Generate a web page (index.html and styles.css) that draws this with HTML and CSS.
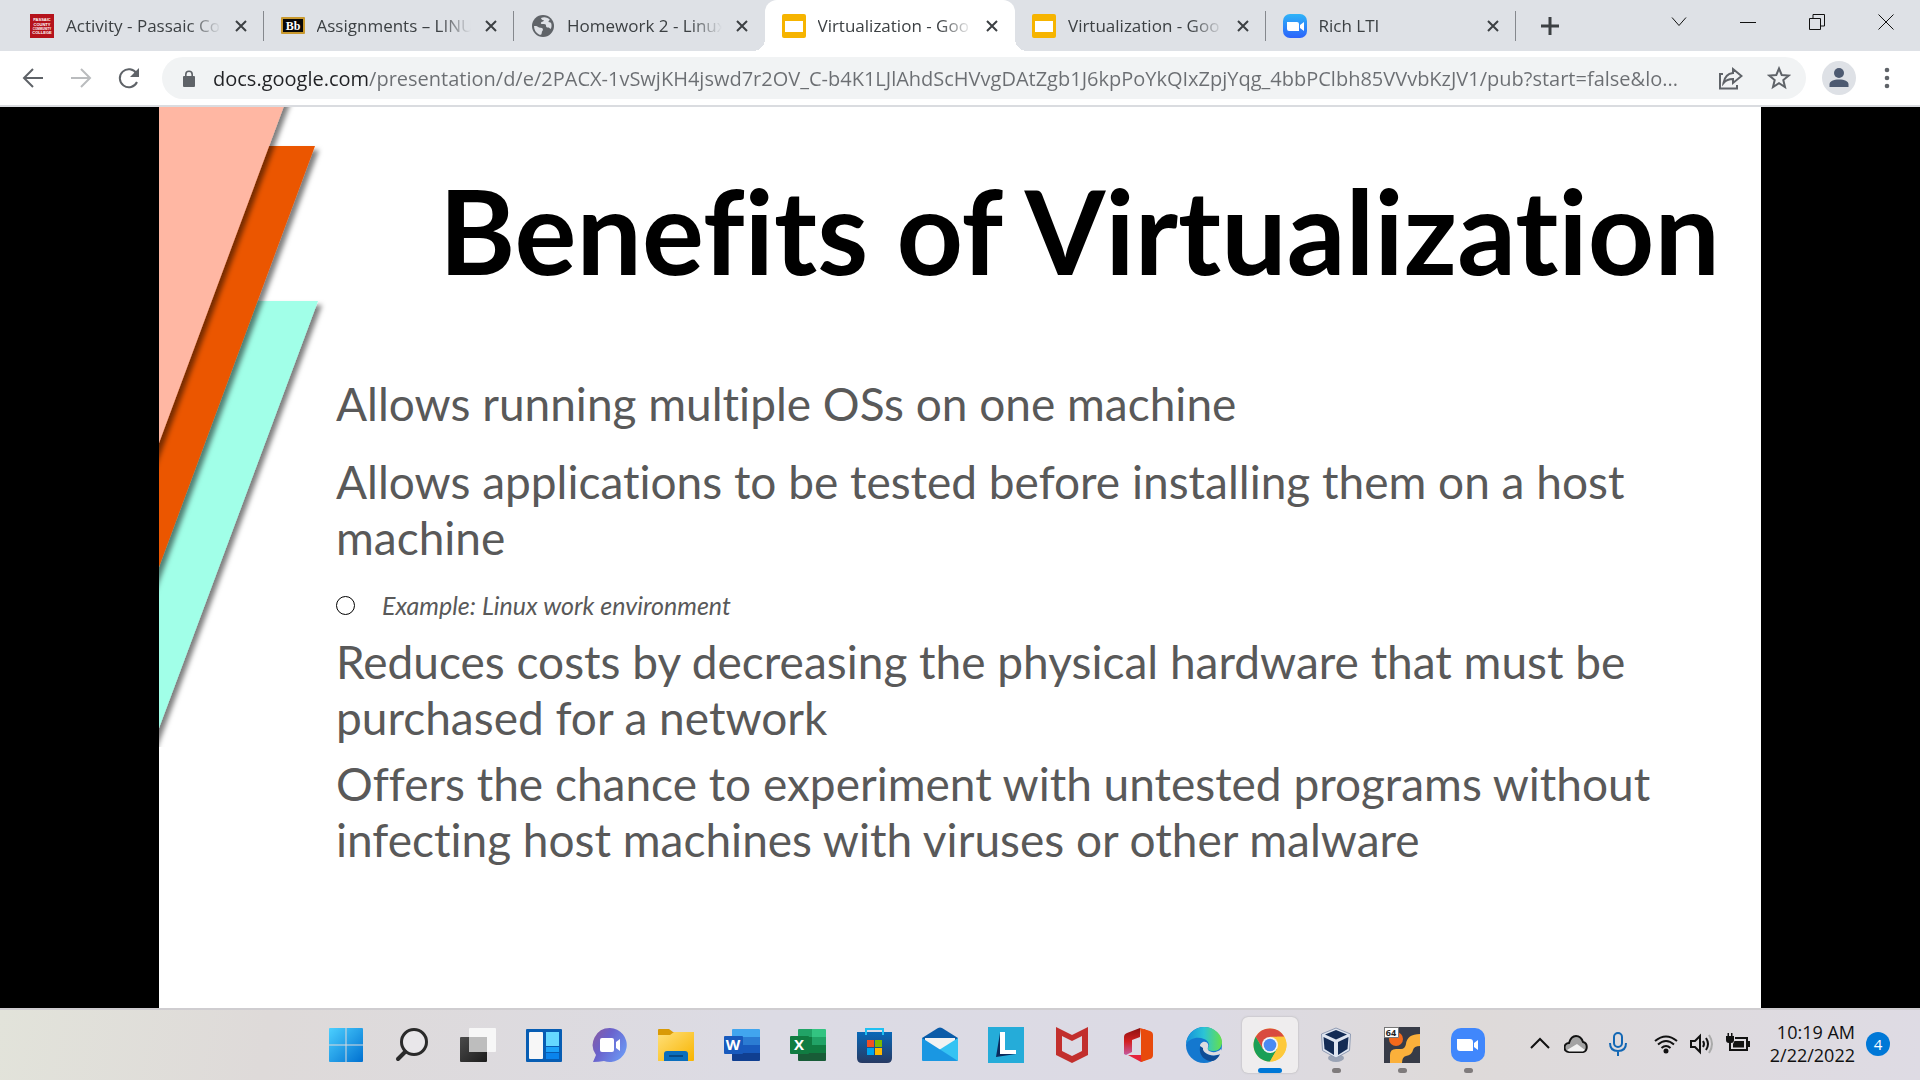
FILE: index.html
```html
<!DOCTYPE html>
<html lang="en">
<head>
<meta charset="utf-8">
<title>Virtualization - Google Slides</title>
<meta name="viewport" content="width=device-width, initial-scale=1">
<link rel="stylesheet" href="styles.css">
</head>
<body>
<header class="browser">
  <div class="tabstrip">
    <div class="tabs">
      <div class="tab">
        <svg class="favicon" viewBox="0 0 24 24" aria-hidden="true"><path fill="#b5121b" d="M0 0h24v24H0z"/><g class="crest" text-anchor="middle"><text x="12" y="7">PASSAIC</text><text x="12" y="12">COUNTY</text><text class="small" x="12" y="16">COMMUNITY</text><text x="12" y="20">COLLEGE</text></g></svg>
        <a class="tab-title" href="#">Activity - Passaic Co</a>
        <button class="tab-close" aria-label="Close tab"><svg viewBox="0 0 12 12"><path d="M1 1l10 10M11 1L1 11"/></svg></button>
      </div>
      <div class="tab">
        <svg class="favicon" viewBox="0 0 24 24" aria-hidden="true"><rect y="3" width="24" height="17" rx="1" fill="#c9992e"/><path fill="#080808" d="M2 5h20v13H2z"/><text class="bb" x="12" y="16" text-anchor="middle">Bb</text></svg>
        <a class="tab-title" href="#">Assignments – LINU</a>
        <button class="tab-close" aria-label="Close tab"><svg viewBox="0 0 12 12"><path d="M1 1l10 10M11 1L1 11"/></svg></button>
      </div>
      <div class="tab no-rule">
        <svg class="favicon" viewBox="0 0 24 24" aria-hidden="true"><circle cx="12" cy="12" r="11" fill="#5f6368"/><path fill="#dee1e6" d="M3 12c2-.3 4 .2 5 1.500l3 .5c1.500 1 1 2.500 0 3.500l-.5 2.500c-.3 1-1.500 1-2.500.5C5 19 3 16 3 12zM10 4c3-1.500 7-.8 9 2-1 .3-1.500 1-1.500 2l2 .5.8 1c.5 2 .3 4-.6 5.500l-2-1.500c-1.500.3-2.500-.3-2.700-1.500.2-1.300-.5-2-2-2h-2.500c-1-.6-.8-1.600.5-2.300 1.500-.3 2.200-1 1.500-1.700-1 .2-2-.3-2.500-2z"/></svg>
        <a class="tab-title" href="#">Homework 2 - Linux</a>
        <button class="tab-close" aria-label="Close tab"><svg viewBox="0 0 12 12"><path d="M1 1l10 10M11 1L1 11"/></svg></button>
      </div>
      <div class="tab active no-rule">
        <svg class="favicon" viewBox="0 0 24 24" aria-hidden="true"><rect width="24" height="24" rx="2" fill="#f6b400"/><path fill="#fff" d="M3 7h18v11H3z"/></svg>
        <a class="tab-title" href="#" aria-current="page">Virtualization - Goo</a>
        <button class="tab-close" aria-label="Close tab"><svg viewBox="0 0 12 12"><path d="M1 1l10 10M11 1L1 11"/></svg></button>
      </div>
      <div class="tab">
        <svg class="favicon" viewBox="0 0 24 24" aria-hidden="true"><rect width="24" height="24" rx="2" fill="#f6b400"/><path fill="#fff" d="M3 7h18v11H3z"/></svg>
        <a class="tab-title" href="#">Virtualization - Goo</a>
        <button class="tab-close" aria-label="Close tab"><svg viewBox="0 0 12 12"><path d="M1 1l10 10M11 1L1 11"/></svg></button>
      </div>
      <div class="tab">
        <svg class="favicon" viewBox="0 0 24 24" aria-hidden="true"><defs><linearGradient id="zoomtab" x2="0" y2="1"><stop stop-color="#2fb4f8"/><stop offset="1" stop-color="#2b63fb"/></linearGradient></defs><rect width="24" height="24" rx="7" fill="url(#zoomtab)"/><path fill="#fff" d="M4 8h10q2 0 2 2v7H6q-2 0-2-2zM17 11l4-3v9l-4-3z"/></svg>
        <a class="tab-title" href="#">Rich LTI</a>
        <button class="tab-close" aria-label="Close tab"><svg viewBox="0 0 12 12"><path d="M1 1l10 10M11 1L1 11"/></svg></button>
      </div>
    </div>
    <button class="new-tab" aria-label="New tab"><svg viewBox="0 0 20 20"><path d="M10 1v18M1 10h18"/></svg></button>
    <div class="window-controls">
      <button aria-label="Search tabs"><svg viewBox="0 0 16 16"><path d="M1 3.500l7 8 7-8"/></svg></button>
      <button aria-label="Minimize"><svg viewBox="0 0 16 16"><path d="M0 8.500h16"/></svg></button>
      <button aria-label="Restore"><svg viewBox="0 0 16 16"><path d="M.5 4.500h11v11H.5zM4 4.500v-4h11.500V12H12"/></svg></button>
      <button aria-label="Close"><svg viewBox="0 0 16 16"><path d="M.5.500l15 15M15.500.500l-15 15"/></svg></button>
    </div>
  </div>
  <div class="toolbar">
    <button class="nav" aria-label="Back"><svg viewBox="0 0 24 24"><path d="M22 12H4M12 3l-9 9 9 9"/></svg></button>
    <button class="nav off" aria-label="Forward" disabled><svg viewBox="0 0 24 24"><path d="M2 12h18M12 3l9 9-9 9"/></svg></button>
    <button class="nav" aria-label="Reload"><svg viewBox="0 0 24 24"><path d="M20 16a9 9 0 1 1-.5-8.500"/><path class="solid" d="M22 2v9h-9z"/></svg></button>
    <div class="omnibox">
      <svg class="lock" viewBox="0 0 12 17" aria-hidden="true"><path fill="#5f6368" d="M0 7q0-1 1-1h1V4.500a4 4 0 0 1 8 0V6h1q1 0 1 1v9q0 1-1 1H1q-1 0-1-1zM3.600 6h4.800V4.500a2.400 2.400 0 0 0-4.800 0z"/></svg>
      <input class="url" type="text" aria-label="Address" spellcheck="false" value="docs.google.com/presentation/d/e/2PACX-1vSwjKH4jswd7r2OV_C-b4K1LJlAhdScHVvgDAtZgb1J6kpPoYkQIxZpjYqg_4bbPClbh85VVvbKzJV1/pub?start=false&amp;lo...">
      <button class="omni" aria-label="Share"><svg viewBox="0 0 24 24"><path d="M4 8H1v14.500h17V19M14 3l8.500 7L14 17v-4c-4 0-7 1-9.500 4C5.500 11 9 7.500 14 7z"/></svg></button>
      <button class="omni" aria-label="Bookmark"><svg viewBox="0 0 24 24"><path stroke-width="2" d="M12 2.500l2.700 6.500 7 .5-5.400 4.500 1.700 7-6-3.800L6 21l1.700-7-5.400-4.500 7-.5z"/></svg></button>
    </div>
    <button class="avatar" aria-label="Profile"><svg viewBox="0 0 34 34"><circle cx="17" cy="12" r="5" fill="#4d5a71"/><path fill="#4d5a71" d="M7.500 26v-2.500c0-3.500 4-5 9.500-5s9.500 1.500 9.500 5V26z"/></svg></button>
    <button class="menu" aria-label="Menu"><svg viewBox="0 0 6 22"><circle cx="3" cy="3" r="2.300"/><circle cx="3" cy="11" r="2.300"/><circle cx="3" cy="19" r="2.300"/></svg></button>
  </div>
</header>

<main class="viewer">
  <article class="slide">
    <svg class="ribbons" viewBox="0 0 170 640" aria-hidden="true">
      <defs><filter id="drop" x="-10%" y="-10%" width="130%" height="120%"><feDropShadow dx="4" dy="4" stdDeviation="2.500" flood-color="#000" flood-opacity=".5"/></filter></defs>
      <path filter="url(#drop)" fill="#a1ffe8" d="M-10 194H159L0 621l-10 27z"/>
      <path filter="url(#drop)" fill="#eb5600" d="M-10 39H156L0 460l-10 27z"/>
      <path filter="url(#drop)" fill="#ffb7a3" d="M-10-20H132L0 336l-10 27z"/>
    </svg>
    <h1>Benefits of Virtualization</h1>
    <div class="points">
      <p>Allows running multiple OSs on one machine</p>
      <p>Allows applications to be tested before installing them on a host machine</p>
      <ul><li>Example: Linux work environment</li></ul>
      <p>Reduces costs by decreasing the physical hardware that must be purchased for a network</p>
      <p>Offers the chance to experiment with untested programs without infecting host machines with viruses or other malware</p>
    </div>
  </article>
</main>

<footer class="taskbar">
  <nav class="apps" aria-label="Taskbar">
    <button class="app" aria-label="Start"><svg viewBox="0 0 36 36"><defs><linearGradient id="win" gradientUnits="userSpaceOnUse" x1="1" y1="1" x2="35" y2="35"><stop stop-color="#4cd0ff"/><stop offset="1" stop-color="#0070d0"/></linearGradient></defs><path fill="url(#win)" d="M2 1h15.500v16.500H1V2q0-1 1-1zM18.500 1H34q1 0 1 1v15.500H18.500zM1 18.500h16.500V35H2q-1 0-1-1zM18.500 18.500H35V34q0 1-1 1H18.500z"/></svg></button>
    <button class="app" aria-label="Search"><svg viewBox="0 0 36 36" fill="none" stroke="#2a2a2a" stroke-linecap="round"><circle cx="20" cy="15" r="12.500" fill="#e9e7ea" stroke-width="3"/><path stroke-width="4" d="M11 25l-7 7"/></svg></button>
    <button class="app" aria-label="Task view"><svg viewBox="0 0 36 36"><defs><linearGradient id="tv" x2="1" y2="1"><stop stop-color="#4b4b4b"/><stop offset="1" stop-color="#1c1c1c"/></linearGradient></defs><rect y="10" width="27" height="25" rx="1" fill="url(#tv)"/><rect x="9" y="1" width="27" height="24" rx="1" fill="#f7f7f7"/><path fill="#bdbdbd" d="M9 10h18v15H9z"/></svg></button>
    <button class="app" aria-label="Widgets"><svg viewBox="0 0 36 36"><rect y="2" width="36" height="33" rx="1" fill="#075db3"/><rect x="3" y="5" width="14" height="27" rx="1" fill="#f7f7f7"/><path fill="#66d8ff" d="M20 5h13v14H20z"/><path fill="#1ca2f8" d="M20 20h13v5H20z"/><path fill="#0a84ec" d="M20 26h13v6H20z"/></svg></button>
    <button class="app" aria-label="Chat"><svg viewBox="0 0 36 36"><defs><linearGradient id="chat" x1="0" x2="1" y2=".6"><stop stop-color="#8b5a9e"/><stop offset=".45" stop-color="#6a62cc"/><stop offset="1" stop-color="#6b93f0"/></linearGradient></defs><path fill="url(#chat)" d="M18 1a17 17 0 1 1-6 33q-5 1-11 1l3-7A17 17 0 0 1 18 1z"/><rect x="8" y="11" width="14" height="14" rx="2" fill="#fff"/><path fill="#fff" d="M24 15l4-3v12l-4-3z"/></svg></button>
    <button class="app" aria-label="File Explorer"><svg viewBox="0 0 36 36"><defs><linearGradient id="fold" x2="1" y2="1"><stop stop-color="#ffe07a"/><stop offset="1" stop-color="#f8b400"/></linearGradient></defs><path fill="#d99a06" d="M0 3q0-1 1-1h10l4 3h20q1 0 1 1v6H0z"/><path fill="url(#fold)" d="M0 8h12l4-3h20v28q0 1-1 1H0z"/><path fill="#0a6ebd" d="M6 34v-7q0-3 3-3h18q3 0 3 3v7z"/><path stroke="#064a86" stroke-width="2" d="M11 29h14"/></svg></button>
    <button class="app" aria-label="Word"><svg viewBox="0 0 36 36"><path fill="#41a5ee" d="M8 3q0-1 1-1h26q1 0 1 1v7H8z"/><path fill="#2b7cd3" d="M8 10h28v8H8z"/><path fill="#185abd" d="M8 18h28v8H8z"/><path fill="#103f91" d="M8 26h28v7q0 1-1 1H9q-1 0-1-1z"/><rect y="9" width="19" height="18" rx="1" fill="#185abd"/><text class="tile" x="9" y="23" text-anchor="middle">W</text></svg></button>
    <button class="app" aria-label="Excel"><svg viewBox="0 0 36 36"><path fill="#21a366" d="M8 3q0-1 1-1h13v8H8z"/><path fill="#33c481" d="M22 2h13q1 0 1 1v7H22z"/><path fill="#107c41" d="M8 10h14v16H8zM22 18h14v8H22z"/><path fill="#21a366" d="M22 10h14v8H22z"/><path fill="#185c37" d="M8 26h28v7q0 1-1 1H9q-1 0-1-1z"/><rect y="9" width="19" height="18" rx="1" fill="#107c41"/><text class="tile" x="9" y="23" text-anchor="middle">X</text></svg></button>
    <button class="app" aria-label="Microsoft Store"><svg viewBox="0 0 36 36"><defs><linearGradient id="store" x2="0" y2="1"><stop stop-color="#0868b8"/><stop offset="1" stop-color="#273a63"/></linearGradient></defs><path fill="url(#store)" d="M1 5h35v26q0 5-5 5H6q-5 0-5-5z"/><path fill="none" stroke="#1fc0f2" stroke-width="2" d="M10 8V2h17v6"/><path fill="#f25022" d="M11 13h7v7h-7z"/><path fill="#7fba00" d="M19 13h7v7h-7z"/><path fill="#00a4ef" d="M11 21h7v7h-7z"/><path fill="#ffb900" d="M19 21h7v7h-7z"/></svg></button>
    <button class="app" aria-label="Mail"><svg viewBox="0 0 36 36"><path fill="#0a5ba8" d="M0 11L16 1q2-1 4 0l16 10v5H0z"/><path fill="#f2f2f2" d="M3 11h30v3L18 26 3 14z"/><path fill="#35c3f3" d="M36 11v22q0 1-1 1L17 23z"/><path fill="#1a97e2" d="M0 11l36 23H1q-1 0-1-1z"/></svg></button>
    <button class="app" aria-label="Lenovo"><svg viewBox="0 0 36 36"><path fill="#25acd9" d="M0 0h36v36H0z"/><path fill="#0b2a5c" d="M12 6L8 30l20-3-12-4z"/><path fill="#fff" d="M12 5h5v18h11v4H12z"/></svg></button>
    <button class="app" aria-label="McAfee"><svg viewBox="0 0 36 36"><path fill="#c22f2d" fill-rule="evenodd" d="M2 0l16 8 16-8v28l-16 8-16-8zM8 9v15l10 5 10-5V9l-10 5z"/></svg></button>
    <button class="app" aria-label="Office"><svg viewBox="0 0 36 36"><defs><linearGradient id="off" x2="0" y2="1"><stop stop-color="#8b1010"/><stop offset=".5" stop-color="#d32020"/><stop offset="1" stop-color="#c55aa0"/></linearGradient></defs><path fill="url(#off)" d="M20 1v9l-8 3v12l-6 3-2-1V10q0-3 3-4z"/><path fill="#e5233d" d="M8 28h13V9l3-7 4 2v28l-7 3z"/><path fill="#e84a0c" d="M20 1l10 3q3 1 3 4v20q0 3-3 4l-9 3V9z"/></svg></button>
    <button class="app" aria-label="Edge"><svg viewBox="0 0 36 36"><defs><linearGradient id="edge" x2="1"><stop stop-color="#1590dc"/><stop offset=".5" stop-color="#2bc4d6"/><stop offset="1" stop-color="#66e04a"/></linearGradient></defs><circle cx="18" cy="18" r="18" fill="#1478cf"/><path fill="url(#edge)" d="M0 17C1 7 9 0 18 0c11 0 18 8 18 15 0 6-4 9-8 9-5 0-7-1-6-3 2-3 1-7-4-9-7-3-15 0-18 5z"/><path fill="#0f4c96" d="M15 17c-4 9 3 18 12 17 3-1 6-4 7-7-8 4-17 0-17-7z"/><path fill="#dddbe0" d="M14 19c0-4 6-6 8-2 1 2-1 4 0 6 3 3 9 3 13-1l1 5-2 0c-8 4-18-1-17-6z"/></svg></button>
    <button class="app current" aria-label="Chrome"><svg viewBox="0 0 36 36"><circle cx="18" cy="18" r="16.500" fill="#fdc93b"/><path fill="#d94b40" d="M3.700 9.800A16.500 16.500 0 0 1 32.300 9.800H18L10.900 22.100z"/><path fill="#1a9f57" d="M3.700 9.800a16.500 16.500 0 0 0 14.300 24.700l7.100-12.400-14.200 0z"/><path fill="#fdc93b" d="M32.300 9.800A16.500 16.500 0 0 1 18 34.500l7.100-12.400V9.800z"/><circle cx="18" cy="18" r="8" fill="#f4f4f4"/><circle cx="18" cy="18" r="6.300" fill="#4a8af4"/></svg></button>
    <button class="app running" aria-label="VirtualBox"><svg viewBox="0 0 36 36"><ellipse cx="18" cy="31" rx="8" ry="4" fill="#9aa3b5"/><path fill="#dfe5f0" stroke="#8f9bb3" d="M18 1l14.500 6-1 16.500L18 31 4.500 23.500 3.500 7z"/><path fill="#142c55" d="M18 3l11 4.500-11 5-11-5zM5.500 10L16 15v13L6.500 22zM30.500 10L20 15v13l9.500-6z"/></svg></button>
    <button class="app running" aria-label="PuTTY"><svg viewBox="0 0 36 36"><path fill="#373b47" d="M0 0h36v36H0z"/><circle cx="12" cy="12" r="7" fill="#f4691b"/><path fill="#fbb03b" d="M6 36v-8q0-6 6-6h5q4 0 5-5 1-10 14-10v12q-6 0-7 4-1 5-7 6-4 1-4 7z"/><path fill="#fff" stroke="#777" d="M.5.500h14v10H.5z"/><text class="bits" x="7" y="9" text-anchor="middle">64</text></svg></button>
    <button class="app running" aria-label="Zoom"><svg viewBox="0 0 36 36"><rect x="1" y="1" width="34" height="34" rx="10" fill="#4087fc"/><path fill="#fff" d="M7 12h13q3 0 3 3v9H10q-3 0-3-3zM24 16l4-3v10l-4-3z"/></svg></button>
  </nav>
  <div class="tray">
    <button class="tray-icon more" aria-label="Show hidden icons"><svg viewBox="0 0 24 24"><path d="M3 16l9-9 9 9"/></svg></button>
    <button class="tray-icon" aria-label="OneDrive"><svg viewBox="0 0 24 24"><path fill="#a3a3a3" d="M5 11Q7 4 12 4q5 0 7 6c5 1 5 9 0 10H5c-6 0-6-9 0-9z"/><path fill="#f1f1f1" stroke="none" d="M3 18l10-6 8 6-2 1.500H5z"/></svg></button>
    <button class="tray-icon mic" aria-label="Microphone"><svg viewBox="0 0 24 24"><rect x="8" y="1" width="8" height="14" rx="4"/><path d="M4 11q0 8 8 8t8-8M12 19v5"/></svg></button>
    <div class="system">
      <button class="tray-icon" aria-label="Wi-Fi"><svg viewBox="0 0 24 24"><path d="M1 9q11-9 22 0M4 12.500q8-7 16 0M7.500 16q4.500-4 9 0"/><circle cx="12" cy="19" r="1.500" fill="#111"/></svg></button>
      <button class="tray-icon" aria-label="Volume"><svg viewBox="0 0 24 24"><path d="M1 9h4l5-5v16l-5-5H1zM13 9q2 3 0 6M16 6q4 6 0 12"/><path stroke="#aaa" d="M19 3q6 9 0 18"/></svg></button>
      <button class="tray-icon" aria-label="Battery"><svg viewBox="0 0 24 24"><path d="M9 6h12v12H5M21 10h2v4h-2M4 11v8"/><path fill="#111" stroke="none" d="M8.500 9H18v6.500H7V12zM0 4h8v4q0 3-3 3H3Q0 11 0 8zM1.500 1h1.500v4H1.500zM5 1h1.500v4H5z"/></svg></button>
    </div>
    <button class="clock"><time datetime="2022-02-22T10:19">10:19 AM<br>2/22/2022</time></button>
    <button class="badge" aria-label="4 notifications">4</button>
  </div>
</footer>
</body>
</html>
```
FILE: styles.css
```css
* { box-sizing: border-box; }

body {
  margin: 0;
  min-height: 100vh;
  display: flex;
  flex-direction: column;
  font-family: "Open Sans", "Noto Sans", sans-serif;
  color: #3c4043;
}

button {
  display: flex;
  align-items: center;
  justify-content: center;
  padding: 0;
  border: 0;
  background: none;
  color: inherit;
  font: inherit;
}

svg { display: block; flex: none; }

/* Tab strip */
.tabstrip {
  display: flex;
  height: 51px;
  padding-left: 13px;
  background: #dee1e6;
}
.tabs { display: flex; flex: 0 1 1503px; min-width: 0; }
.tab {
  position: relative;
  flex: 1 1 0;
  min-width: 0;
  display: flex;
  align-items: center;
  gap: 12px;
  padding: 0 17px;
}
.tab::after {
  content: "";
  position: absolute;
  right: 0;
  top: 11px;
  width: 1px;
  height: 30px;
  background: #85888d;
}
.tab.no-rule::after { display: none; }
.tab.active { background: #fff; border-radius: 12px 12px 0 0; }
.tab.active::before {
  content: "";
  position: absolute;
  left: -12px;
  right: -12px;
  bottom: 0;
  height: 12px;
  background:
    radial-gradient(circle at 0 0, transparent 12px, #fff 12px) left / 12px 12px no-repeat,
    radial-gradient(circle at 100% 0, transparent 12px, #fff 12px) right / 12px 12px no-repeat;
}
.favicon { width: 24px; height: 24px; }
.crest { font: bold 4px "Liberation Sans", sans-serif; fill: #fff; }
.crest .small { font-size: 3px; }
.bb { font: bold 12px "Liberation Serif", serif; fill: #fff; }
.tab-title {
  flex: 1;
  min-width: 0;
  overflow: hidden;
  white-space: nowrap;
  color: #3c4043;
  text-decoration: none;
  font-size: 17px;
  line-height: 24px;
  mask-image: linear-gradient(to right, #000 calc(100% - 34px), transparent calc(100% - 2px));
}
.tab-close svg { width: 12px; height: 12px; stroke: #3c4043; stroke-width: 2; }
.new-tab { width: 67px; }
.new-tab svg { width: 20px; height: 20px; stroke: #3c4043; stroke-width: 3; }
.window-controls { display: flex; margin-left: auto; height: 43px; }
.window-controls button { width: 69px; }
.window-controls svg { width: 16px; height: 16px; fill: none; stroke: #111; stroke-width: 1; }

/* Toolbar */
.toolbar {
  display: flex;
  align-items: center;
  height: 56px;
  padding: 0 16px 0 9px;
  border-bottom: 2px solid #dadce0;
  background: #fff;
}
.nav { width: 48px; height: 42px; }
.nav svg { width: 24px; height: 24px; fill: none; stroke: #5f6368; stroke-width: 2; }
.nav .solid { fill: #5f6368; stroke: none; }
.nav.off svg { stroke: #babcbe; }
.omnibox {
  flex: 1;
  min-width: 0;
  display: flex;
  align-items: center;
  height: 42px;
  margin-left: 9px;
  padding: 0 15px 0 21px;
  border-radius: 21px;
  background: #f1f3f4;
}
.lock { width: 12px; height: 17px; margin-right: 18px; }
.url {
  flex: 1;
  min-width: 0;
  height: 32px;
  padding: 0;
  border: 0;
  outline: 0;
  font: 20px "Open Sans", "Noto Sans", sans-serif;
  color: transparent;
  background: linear-gradient(to right, #202124 155px, #6b6e72 155px);
  background-clip: text;
}
.omni { width: 24px; margin-left: 18px; }
.omni + .omni { margin-left: 24px; }
.omni svg { width: 24px; height: 24px; fill: none; stroke: #5f6368; stroke-width: 2; }
.avatar {
  width: 34px;
  height: 34px;
  margin: 0 14px 0 16px;
  border-radius: 50%;
  background: #dee1e6;
}
.avatar svg { width: 34px; height: 34px; }
.menu { width: 34px; height: 34px; }
.menu svg { width: 6px; height: 22px; fill: #5f6368; }

/* Presentation */
.viewer {
  flex: 1;
  display: grid;
  grid-template-columns: 159px minmax(0, 1fr) 159px;
  background: #000;
}
.slide {
  position: relative;
  grid-column: 2;
  padding: 56px 30px 48px 177px;
  background: #fff;
  font-family: Lato, sans-serif;
  font-variant-ligatures: none;
}
.ribbons {
  position: absolute;
  left: 0;
  top: 0;
  width: 170px;
  height: 640px;
}
.slide h1 {
  margin: 0 0 77px 103px;
  font-size: 116px;
  font-weight: bold;
  line-height: 136px;
  color: #000;
  white-space: nowrap;
}
.points { color: #595959; font-size: 46px; line-height: 56px; }
.points p { margin: 0 0 10px; }
.points p:first-child { margin-bottom: 22px; }
.points ul {
  margin: 24px 0 14px;
  padding: 0;
  list-style: none;
}
.points li {
  display: flex;
  align-items: center;
  gap: 27px;
  font-size: 25px;
  line-height: 30px;
  font-style: italic;
}
.points li::before {
  content: "";
  width: 17px;
  height: 17px;
  border: 1px solid #000;
  border-radius: 50%;
}

/* Taskbar */
.taskbar {
  display: flex;
  align-items: center;
  height: 72px;
  padding: 0 30px 0 318px;
  border-top: 2px solid #cfcdd0;
  background: linear-gradient(100deg, #e2e3da 0, #dedad9 14%, #dcdbe4 40%, #dcdae4 62%, #dedad9 76%, #dedbe4 100%);
}
.apps { display: flex; gap: 10px; }
.app {
  position: relative;
  width: 56px;
  height: 56px;
  border-radius: 6px;
}
.app svg { width: 36px; height: 36px; }
.app.current { background: #efedee; box-shadow: 0 0 2px #aaa; }
.app.current::after, .app.running::after {
  content: "";
  position: absolute;
  bottom: 0;
  width: 9px;
  height: 5px;
  border-radius: 3px;
  background: #7f7b7c;
}
.app.current::after { width: 24px; background: #0078d7; }
.tile { font: bold 15px "Open Sans", sans-serif; fill: #fff; }
.bits { font: bold 9px "Open Sans", sans-serif; fill: #222; }
.tray { display: flex; align-items: center; margin-left: auto; padding-bottom: 2px; gap: 18px; }
.tray-icon svg { width: 24px; height: 24px; fill: none; stroke: #111; stroke-width: 2; }
.more { margin-right: -6px; }
.mic svg { stroke: #1267b4; }
.system { display: flex; gap: 12px; margin: 0 2px 0 6px; }
.clock {
  font-size: 18px;
  line-height: 23px;
  color: #111;
  text-align: right;
}
.badge {
  width: 24px;
  height: 24px;
  margin-left: -7px;
  border-radius: 50%;
  background: #0078d7;
  color: #fff;
  font-size: 15px;
  line-height: 24px;
}
```
